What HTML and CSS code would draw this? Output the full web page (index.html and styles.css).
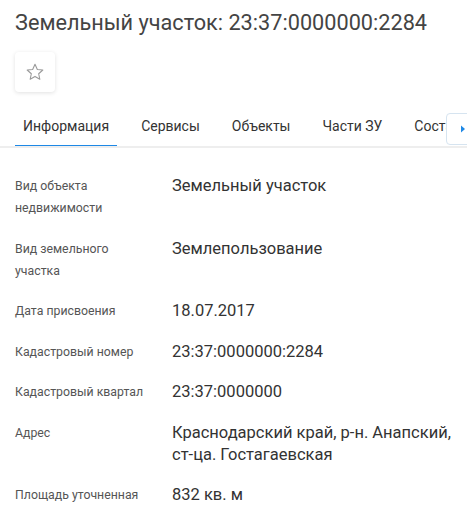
FILE: index.html
```html
<!DOCTYPE html>
<html lang="ru">
<head>
  <meta charset="UTF-8" />
  <meta name="viewport" content="width=device-width, initial-scale=1.0">
  <title>Земельный участок</title>
  <link rel="stylesheet" href="styles.css">
</head>
<body>

  <h1 class="title">Земельный участок: 23:37:0000000:2284</h1>

  <div class="actions">
    <button class="fav" title="В избранное">
      <svg width="20" height="20" viewBox="0 0 24 24"><path d="M12 2.8l2.8 6.1 6.6.7-5 4.5 1.4 6.6L12 17.3l-5.8 3.4 1.4-6.6-5-4.5 6.6-.7z" fill="none" stroke="#9a9a9a" stroke-width="1.3" stroke-linejoin="round"/></svg>
    </button>
  </div>

  <div class="tabs">
    <div class="tab-list">
      <div class="tab active">Информация</div>
      <div class="tab">Сервисы</div>
      <div class="tab">Объекты</div>
      <div class="tab">Части ЗУ</div>
      <div class="tab">Состав</div>
    </div>
    <div class="tab-next">
      <svg width="6" height="8" viewBox="0 0 6 8"><path d="M1 0.5L5 4 1 7.5z" fill="#1e88e5"/></svg>
    </div>
  </div>

  <div class="info">
    <div class="label">Вид объекта недвижимости</div>
    <div class="value">Земельный участок</div>

    <div class="label">Вид земельного участка</div>
    <div class="value">Землепользование</div>

    <div class="label">Дата присвоения</div>
    <div class="value">18.07.2017</div>

    <div class="label">Кадастровый номер</div>
    <div class="value">23:37:0000000:2284</div>

    <div class="label">Кадастровый квартал</div>
    <div class="value">23:37:0000000</div>

    <div class="label">Адрес</div>
    <div class="value">Краснодарский край, р-н. Анапский, ст-ца. Гостагаевская</div>

    <div class="label">Площадь уточненная</div>
    <div class="value">832 кв. м</div>
  </div>

</body>
</html>
```

FILE: styles.css
```css
body { font-family: Roboto, "Noto Sans", sans-serif; margin: 0; background: #fff; color: #333; overflow: hidden; }

.title {
  font-size: 21.7px; font-weight: normal; color: #444;
  margin: 0; padding: 9px 15px 0; line-height: 28px;
}

.actions { padding: 15px 15px 0; }
.fav {
  width: 40px; height: 40px; border: none; border-radius: 4px; background: #fff;
  box-shadow: 0 1px 4px rgba(0,0,0,0.12);
  display: flex; align-items: center; justify-content: center; padding: 0; cursor: pointer;
}

.tabs {
  display: flex; margin-top: 17px; border-bottom: 2px solid #eee;
  position: relative; overflow: hidden;
}
.tab-list { display: flex; padding-left: 15px; white-space: nowrap; }
.tab {
  font-size: 14px; color: #333; padding: 9px 8px 11px; margin-right: 16px;
  border-bottom: 3px solid transparent; margin-bottom: -2px;
}
.tab.active { border-bottom-color: #1e88e5; }
.tab-next {
  position: absolute; right: -8px; top: 4px; bottom: 1px; width: 29px;
  background: #fff; border: 1px solid #d6e4f0; border-radius: 4px;
  display: flex; align-items: center; padding-left: 13px; box-sizing: border-box;
}

.info {
  display: grid; grid-template-columns: 157px 1fr;
  padding: 27px 4px 0 15px; row-gap: 18.5px;
}
.label { font-size: 12.3px; line-height: 22px; color: #555; padding-right: 20px; }
.value { font-size: 16.5px; line-height: 22px; color: #333; }
```
